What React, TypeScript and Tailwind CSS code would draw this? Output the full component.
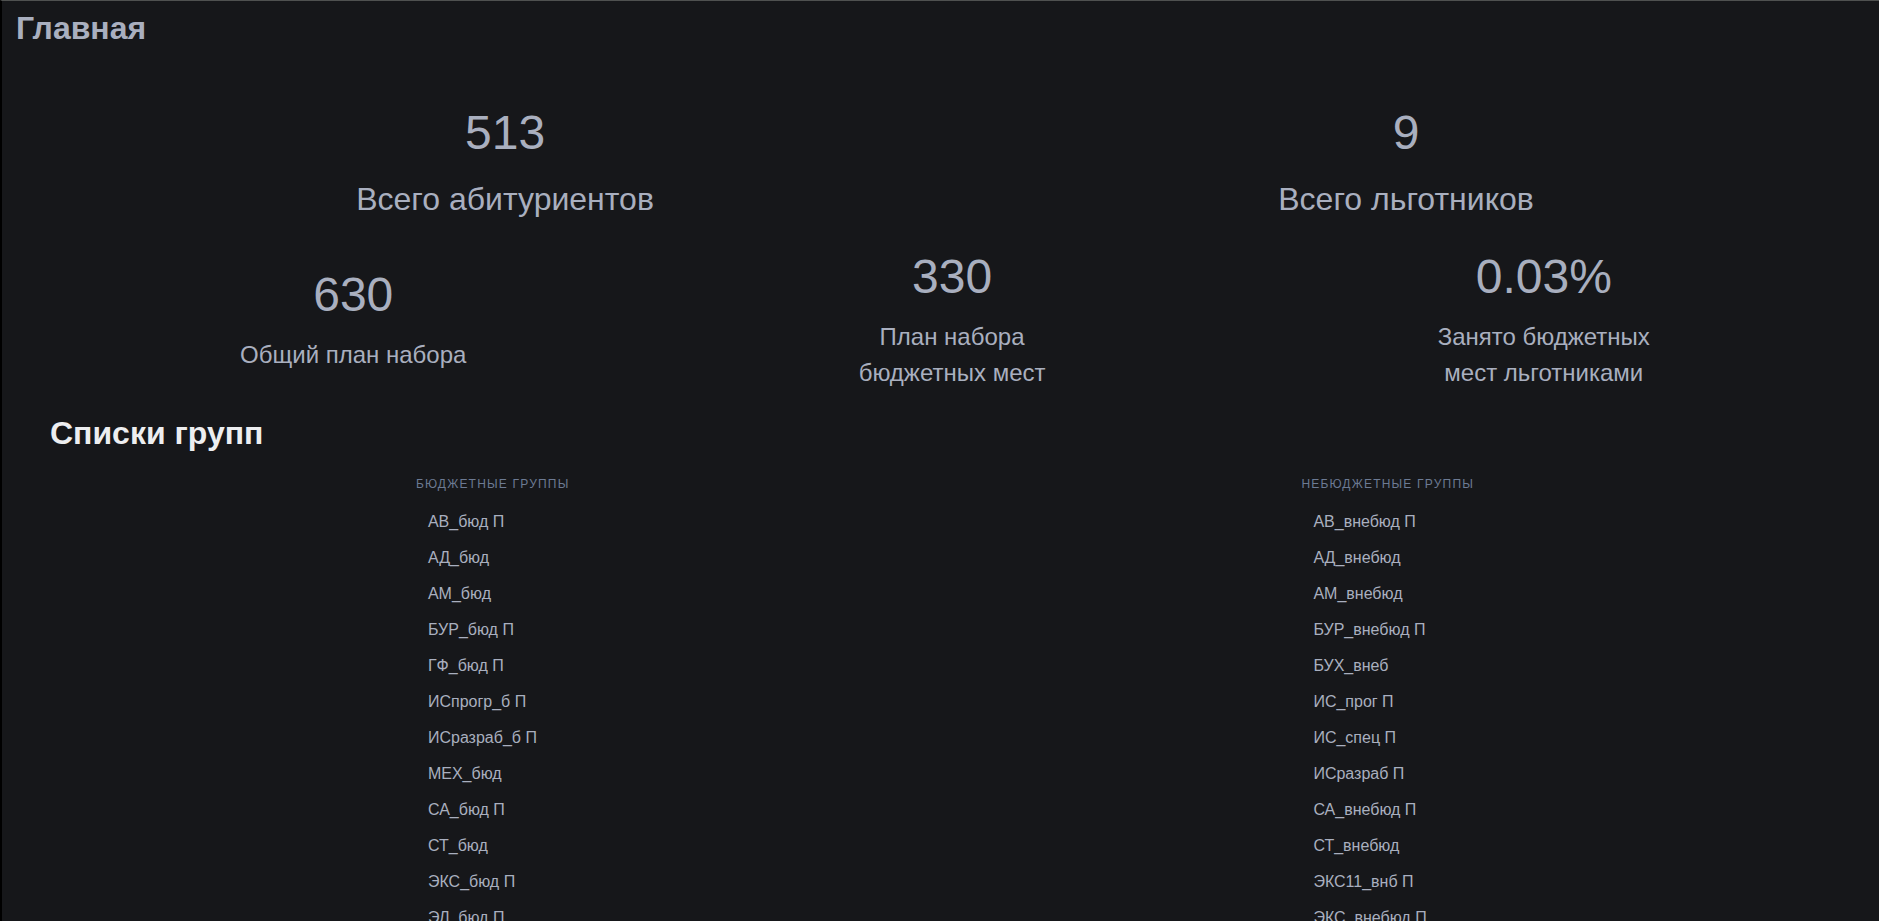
type Stat = { value: string; label: string[] };

const totals: Stat[] = [
  { value: '513', label: ['Всего абитуриентов'] },
  { value: '9', label: ['Всего льготников'] },
];

const plans: Stat[] = [
  { value: '630', label: ['Общий план набора'] },
  { value: '330', label: ['План набора', 'бюджетных мест'] },
  { value: '0.03%', label: ['Занято бюджетных', 'мест льготниками'] },
];

const groups = [
  {
    title: 'Бюджетные группы',
    items: [
      'АВ_бюд П', 'АД_бюд', 'АМ_бюд', 'БУР_бюд П', 'ГФ_бюд П', 'ИСпрогр_б П',
      'ИСразраб_б П', 'МЕХ_бюд', 'СА_бюд П', 'СТ_бюд', 'ЭКС_бюд П', 'ЭЛ_бюд П',
    ],
  },
  {
    title: 'Небюджетные группы',
    items: [
      'АВ_внебюд П', 'АД_внебюд', 'АМ_внебюд', 'БУР_внебюд П', 'БУХ_внеб', 'ИС_прог П',
      'ИС_спец П', 'ИСразраб П', 'СА_внебюд П', 'СТ_внебюд', 'ЭКС11_внб П', 'ЭКС_внебюд П',
    ],
  },
];

function StatBlock({ stat, large }: { stat: Stat; large?: boolean }) {
  return (
    <div className="flex flex-col gap-[6px] text-center">
      <p className="text-[48px] leading-[72px]">{stat.value}</p>
      <p className={large ? 'text-[32px] leading-[48px]' : 'text-[24px] leading-[36px]'}>
        {stat.label.map((line) => (
          <span key={line} className="block">{line}</span>
        ))}
      </p>
    </div>
  );
}

export default function App() {
  return (
    <div className="h-screen overflow-hidden border-t border-l-2 border-t-[#4f5150] border-l-black bg-[#16171a] font-['Liberation_Sans',Arial,sans-serif] text-[#a9afbf]">
      <header className="px-[14px] pt-[3px]">
        <h1 className="text-[32px] font-bold leading-[48px]">Главная</h1>
      </header>
      <main className="pt-[45px] pr-[33px] pl-[42px]">
        <section className="flex items-center justify-around">
          {totals.map((s) => <StatBlock key={s.value} stat={s} large />)}
        </section>
        <section className="mt-[18px] flex items-center justify-around">
          {plans.map((s) => <StatBlock key={s.value} stat={s} />)}
        </section>
        <section className="px-[6px] pt-[18px]">
          <h2 className="text-[32px] font-bold leading-[48px] text-[#edeef0]">Списки групп</h2>
          <div className="flex justify-around pt-[17px]">
            {groups.map((g) => (
              <nav key={g.title} aria-label={g.title}>
                <h3 className="pb-[10px] text-[12px] uppercase leading-[20px] tracking-widest text-[#6c7a93]">{g.title}</h3>
                <ul>
                  {g.items.map((item) => (
                    <li key={item}>
                      <a href="#" className="block px-[12px] text-[16px] leading-[36px]">{item}</a>
                    </li>
                  ))}
                </ul>
              </nav>
            ))}
          </div>
        </section>
      </main>
    </div>
  );
}
